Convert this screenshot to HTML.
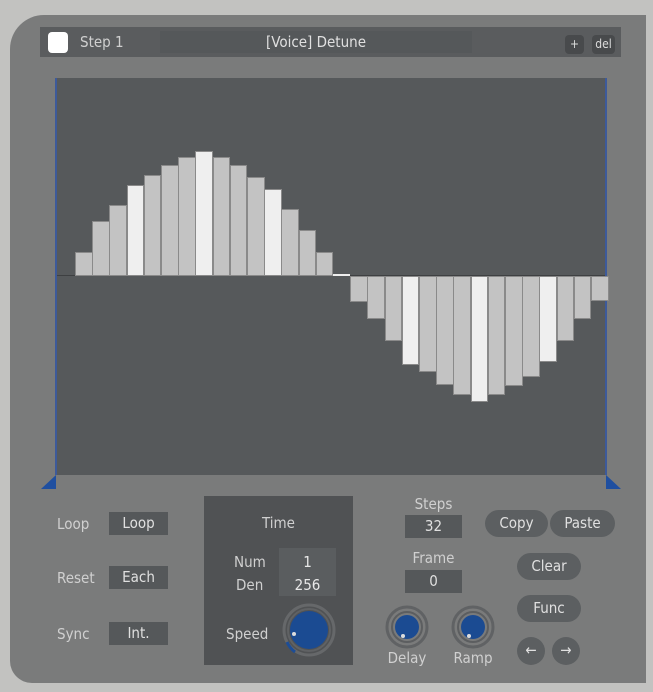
<!DOCTYPE html>
<html><head><style>
body{margin:0;width:653px;height:692px;background:#c2c2c0;position:relative;overflow:hidden;font-family:"DejaVu Sans Condensed","Liberation Sans",sans-serif;font-size:15px;color:#d4d4d4}
.a{position:absolute}
.panel{left:10px;top:15px;width:636px;height:668px;background:#7a7b7b;border-top-left-radius:34px;border-bottom-left-radius:22px}
.box{position:absolute;background:#55585a;text-align:center;color:#e0e0e0}
.lbl{position:absolute;color:#d0d0d0}
.pill{position:absolute;background:#5c5f61;border-radius:14px;text-align:center;color:#e0e0e0;line-height:27px;height:27px}
.bar{position:absolute;background:#c3c3c3;box-sizing:border-box;border:1px solid #8a8a8a}
.w{background:#efefef}
</style></head><body>
<div class="a panel"></div>
<div class="a" style="left:40px;top:27px;width:581px;height:30px;background:#5a5c5e"></div>
<div class="a" style="left:48px;top:32px;width:20px;height:21px;background:#fff;border-radius:4px"></div>
<div class="lbl" style="left:80px;top:33px">Step 1</div>
<div class="a" style="left:160px;top:31px;width:312px;height:22px;background:#55585a;text-align:center;line-height:22px;color:#e0e0e0">[Voice] Detune</div>
<div class="a" style="left:565px;top:35px;width:19px;height:19px;background:#484a4c;border-radius:4px;text-align:center;line-height:19px;color:#ddd;font-size:12px">+</div>
<div class="a" style="left:592px;top:35px;width:23px;height:19px;background:#484a4c;border-radius:4px;text-align:center;line-height:19px;color:#ddd;font-size:12px">del</div>

<div class="a" id="g" style="left:55px;top:78px;width:552px;height:397px;background:#56595b;border-left:2px solid #3d5a9a;border-right:2px solid #3d5a9a;box-sizing:border-box">
<div class="a" style="left:0;top:197px;width:100%;height:1px;background:#3e4042"></div>
</div>
<svg class="a" style="left:40px;top:474px" width="18" height="16"><polygon points="16,1 16,15 1,15" fill="#1f4fa0"/></svg>
<svg class="a" style="left:605px;top:474px" width="18" height="16"><polygon points="1,1 1,15 16,15" fill="#1f4fa0"/></svg>

<div class="lbl" style="left:57px;top:515px">Loop</div>
<div class="box" style="left:109px;top:512px;width:59px;height:23px;line-height:23px">Loop</div>
<div class="lbl" style="left:57px;top:569px">Reset</div>
<div class="box" style="left:109px;top:566px;width:59px;height:23px;line-height:23px">Each</div>
<div class="lbl" style="left:57px;top:625px">Sync</div>
<div class="box" style="left:109px;top:622px;width:59px;height:23px;line-height:23px">Int.</div>

<div class="a" style="left:204px;top:496px;width:149px;height:169px;background:#505254"></div>
<div class="lbl" style="left:204px;top:514px;width:149px;text-align:center">Time</div>
<div class="box" style="left:279px;top:548px;width:57px;height:48px;background:#5a5d5f"></div>
<div class="lbl" style="left:234px;top:553px">Num</div>
<div class="lbl" style="left:236px;top:576px">Den</div>
<div class="lbl" style="left:279px;top:553px;width:57px;text-align:center;color:#e8e8e8">1</div>
<div class="lbl" style="left:279px;top:576px;width:57px;text-align:center;color:#e8e8e8">256</div>
<div class="lbl" style="left:226px;top:625px">Speed</div>
<svg class="a" style="left:281px;top:602px" width="56" height="56"><circle cx="28" cy="28" r="25" fill="none" stroke="#66686a" stroke-width="3"/><circle cx="28" cy="28" r="21" fill="none" stroke="#606264" stroke-width="2"/><path d="M6 40 A25 25 0 0 0 14 50" fill="none" stroke="#1d4d96" stroke-width="3"/><circle cx="28" cy="28" r="19" fill="#1b4b92"/><circle cx="13" cy="32" r="2" fill="#ddd"/></svg>

<div class="lbl" style="left:405px;top:495px;width:57px;text-align:center">Steps</div>
<div class="box" style="left:405px;top:515px;width:57px;height:23px;line-height:23px">32</div>
<div class="lbl" style="left:405px;top:549px;width:57px;text-align:center">Frame</div>
<div class="box" style="left:405px;top:570px;width:57px;height:23px;line-height:23px">0</div>
<svg class="a" style="left:385px;top:605px" width="44" height="44"><circle cx="22" cy="22" r="20" fill="none" stroke="#606264" stroke-width="3"/><circle cx="22" cy="22" r="15" fill="none" stroke="#5c5e60" stroke-width="2"/><circle cx="22" cy="22" r="12" fill="#1b4b92"/><circle cx="18" cy="31" r="2" fill="#ddd"/></svg>
<svg class="a" style="left:451px;top:605px" width="44" height="44"><circle cx="22" cy="22" r="20" fill="none" stroke="#606264" stroke-width="3"/><circle cx="22" cy="22" r="15" fill="none" stroke="#5c5e60" stroke-width="2"/><circle cx="22" cy="22" r="12" fill="#1b4b92"/><circle cx="18" cy="31" r="2" fill="#ddd"/></svg>
<div class="lbl" style="left:380px;top:649px;width:54px;text-align:center">Delay</div>
<div class="lbl" style="left:446px;top:649px;width:54px;text-align:center">Ramp</div>

<div class="pill" style="left:485px;top:510px;width:63px">Copy</div>
<div class="pill" style="left:550px;top:510px;width:65px">Paste</div>
<div class="pill" style="left:517px;top:553px;width:64px">Clear</div>
<div class="pill" style="left:517px;top:595px;width:64px">Func</div>
<div class="pill" style="left:517px;top:637px;width:28px;height:28px">←</div>
<div class="pill" style="left:552px;top:637px;width:28px;height:28px">→</div>

<script>
var tops={1:252,2:221,3:205,4:185,5:175,6:165,7:157,8:151,9:157,10:165,11:177,12:189,13:209,14:230,15:252};
var bots={17:302,18:319,19:341,20:365,21:372,22:385,23:395,24:402,25:395,26:386,27:377,28:362,29:341,30:319,31:301};
var g=document.getElementById('g'),Z=276,h='';
for(var i=1;i<32;i++){var x=73+(i-1)*17.2-55;var c=(i%4==0)?'bar w':'bar';
if(tops[i])h+='<div class="'+c+'" style="left:'+x+'px;top:'+(tops[i]-78)+'px;width:17.5px;height:'+(Z-tops[i])+'px"></div>';
else if(bots[i])h+='<div class="'+c+'" style="left:'+x+'px;top:'+(Z-78)+'px;width:17.5px;height:'+(bots[i]-Z)+'px"></div>';
else h+='<div class="a" style="left:'+x+'px;top:'+(Z-80)+'px;width:17px;height:2px;background:#eee"></div>';}
g.insertAdjacentHTML('beforeend',h);
</script>
</body></html>
